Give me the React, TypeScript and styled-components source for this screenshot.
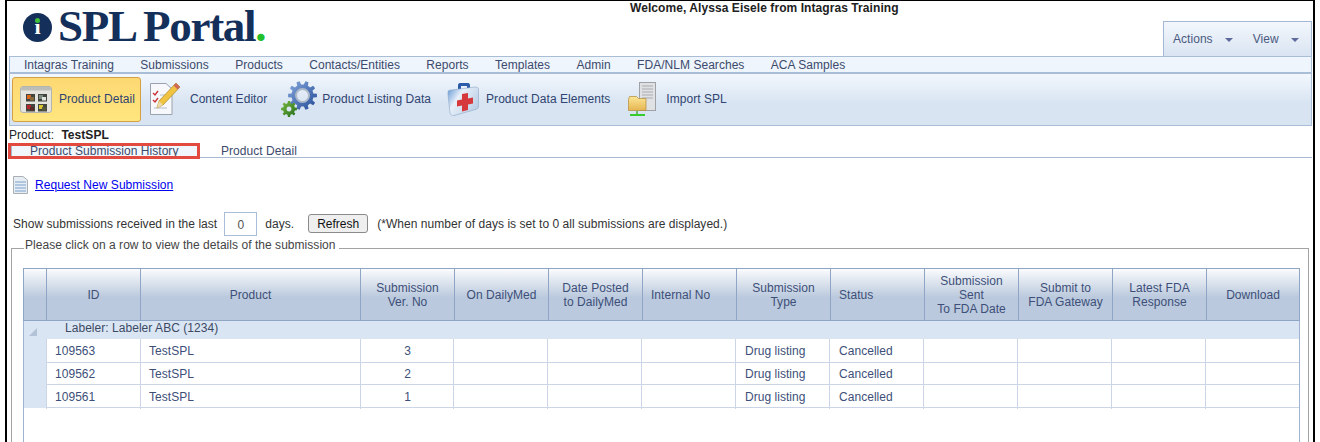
/**
 * SPL Portal product page: header, menu, ribbon, tabs and the submissions grid.
 */

import styled, { createGlobalStyle } from 'styled-components';

const Global = createGlobalStyle`
  html, body {
    margin: 0;
    height: 442px;
    overflow: hidden;
    background: #fff;
  }
  body {
    font-family: "Liberation Sans", Arial, sans-serif;
    font-size: 12px;
    letter-spacing: 0.04px;
    color: #333;
  }
`;

const Frame = styled.div`
  box-sizing: border-box;
  width: 1310px;
  height: 442px;
  margin-left: 5px;
  padding: 0 2px;
  border: 2px solid #000;
  border-width: 1.5px 2px 0 2px;
  overflow: hidden;
`;

const Header = styled.header`
  display: flex;
  height: 54.5px;
  margin-right: -1px;
`;

const Logo = styled.div`
  display: flex;
  align-items: flex-start;
  gap: 6px;
  width: 595px;
  padding: 4px 0 0 14px;
  box-sizing: border-box;
`;

const LogoBadge = styled.span`
  position: relative;
  flex: none;
  width: 29px;
  height: 29px;
  margin-top: 7.5px;
  border-radius: 50%;
  background: #14305a;
  color: #fff;
  font: bold 22px/28px "Liberation Serif", serif;
  letter-spacing: 0;
  text-align: center;

  &::before {
    content: '';
    position: absolute;
    left: 12px;
    top: 5px;
    width: 5px;
    height: 5px;
    border-radius: 50%;
    background: #3fbf3a;
  }
`;

const LogoText = styled.span`
  font: bold 45px/42px "Liberation Serif", serif;
  color: #14305a;
  letter-spacing: -1.3px;
  word-spacing: -1px;
  white-space: nowrap;

  b {
    color: #22c02a;
  }
`;

const Welcome = styled.div`
  flex: 1;
  padding: 1px 0 0 26px;
  font-weight: bold;
  color: #222;
  letter-spacing: 0.07px;
  line-height: 12px;
`;

const Actions = styled.div`
  display: flex;
  align-items: center;
  align-self: flex-end;
  box-sizing: border-box;
  width: 149px;
  height: 35px;
  padding: 0 0 0 9px;
  border: 1px solid #a5b8d3;
  border-bottom: 0;
  background: linear-gradient(#f3f7fc, #d9e4f2);
  color: #4a5a7e;
`;

const ActionLabel = styled.span`
  display: inline-flex;
  align-items: center;
  gap: 12px;
  margin-right: 20px;

  &::after {
    content: '';
    width: 0;
    height: 0;
    margin-top: 3px;
    border: 4px solid transparent;
    border-top-color: #5e6a9c;
    border-bottom: 0;
  }
`;

const Menu = styled.nav`
  display: flex;
  box-sizing: border-box;
  height: 16px;
  margin-right: -1px;
  padding-left: 0.7px;
  border: 1px solid #a9bed6;
  border-bottom: 0;
  background: #eef5fd;
  color: #3c4a6b;
  line-height: 16px;
`;

const MenuItem = styled.span`
  padding: 0 13.2px;
`;

const Ribbon = styled.div`
  display: flex;
  align-items: center;
  box-sizing: border-box;
  height: 54px;
  margin-right: -1px;
  padding: 0 2px;
  border: 1px solid #a9bed6;
  border-top-width: 2px;
  background: linear-gradient(#f2f7fd, #d8e4f2 58%);
`;

const RibbonButton = styled.div<{ $active?: boolean; $gap: number; $left: number }>`
  display: flex;
  align-items: center;
  box-sizing: border-box;
  gap: ${(p) => p.$gap}px;
  height: 45px;
  margin-left: ${(p) => p.$left}px;
  padding: 0 5px 0 7px;
  border: 1px solid ${(p) => (p.$active ? '#d59f45' : 'transparent')};
  border-radius: 3px;
  background: ${(p) => (p.$active ? 'linear-gradient(#fdd873, #ffe67e)' : 'transparent')};
  color: #2f4470;
  white-space: nowrap;
`;

const ProductLine = styled.div`
  height: 18px;
  padding-top: 2px;
  box-sizing: border-box;
  color: #222;
  line-height: 14px;

  strong {
    margin-left: 4px;
  }
`;

const Tabs = styled.div`
  display: flex;
  box-sizing: border-box;
  height: 14px;
  margin-right: -1px;
  border-bottom: 1px solid #a9b9cf;
  color: #3c4a6b;
`;

const Tab = styled.span<{ $selected?: boolean }>`
  box-sizing: content-box;
  flex: none;
  width: ${(p) => (p.$selected ? '149px' : 'auto')};
  height: 13px;
  margin-left: ${(p) => (p.$selected ? '0' : '22px')};
  padding: 1px ${(p) => (p.$selected ? '20px' : '0')} 0 ${(p) => (p.$selected ? '21px' : '0')};
  background: ${(p) => (p.$selected ? '#f1f6fc' : 'transparent')};
  box-shadow: ${(p) => (p.$selected ? 'inset 3px 0 0 #a9b9cf' : 'none')};
  outline: ${(p) => (p.$selected ? '3px solid #e2493f' : 'none')};
  outline-offset: -2px;
  line-height: 13px;
  white-space: nowrap;
`;

const RequestRow = styled.div`
  display: flex;
  align-items: center;
  gap: 7px;
  height: 22px;
  margin: 16px 0 0 4px;

  a {
    color: #0000ee;
    text-decoration: underline;
  }
`;

const FilterRow = styled.div`
  display: flex;
  align-items: center;
  height: 24px;
  margin: 16px 0 0 4px;
  color: #333;
`;

const DaysInput = styled.input`
  box-sizing: border-box;
  width: 33px;
  height: 24px;
  margin: 0 8px 0 7px;
  padding: 2px 0 0;
  border: 1px solid #a9bdd6;
  background: #fff;
  font: 12px "Liberation Sans", Arial, sans-serif;
  color: #555;
  text-align: center;
`;

const RefreshButton = styled.button`
  box-sizing: border-box;
  width: 60px;
  height: 19px;
  margin: 0 9px 0 14px;
  padding: 0;
  border: 1px solid #8a8a8a;
  border-radius: 3px;
  background: #efefef;
  font: 12px "Liberation Sans", Arial, sans-serif;
  color: #111;
`;

const Group = styled.fieldset`
  box-sizing: border-box;
  width: 1298px;
  height: 270px;
  margin: 2px 0 0 2px;
  padding: 8px 7px 0 11px;
  border: 1px solid #a3a3a3;
  border-bottom: 0;

  legend {
    margin-left: 1px;
    padding: 0 3px 8px 1px;
    line-height: 14px;
    color: #444;
  }
`;

const Grid = styled.div`
  box-sizing: border-box;
  width: 1277px;
  height: 220px;
  border: 1px solid #9fb2cf;
  border-top: 0;
  color: #3d4f78;
`;

const HeadRow = styled.div`
  display: grid;
  grid-template-columns: 22px 94px 220px repeat(9, 94px) 1fr;
  height: 53px;
  margin: 0 -1px;
  border: 1px solid #8fa5c6;
  box-sizing: border-box;
  background: linear-gradient(#fafbfd, #bac9dd 56%);
  line-height: 14px;
`;

const HeadCell = styled.div<{ $left?: boolean }>`
  display: flex;
  align-items: center;
  justify-content: ${(p) => (p.$left ? 'flex-start' : 'center')};
  padding: 1px 0 0 ${(p) => (p.$left ? '8px' : '0')};
  border-left: 1px solid #8fa5c6;
  text-align: center;

  &:first-child {
    border-left: 0;
  }
`;

const GroupRow = styled.div`
  position: relative;
  height: 18px;
  padding-left: 41px;
  background: #d9e5f3;
  color: #3c4a64;
  line-height: 15px;

  &::before {
    content: '';
    position: absolute;
    left: 5px;
    top: 7px;
    border-style: solid;
    border-width: 0 0 8px 8px;
    border-color: transparent transparent #b3c2d6 transparent;
  }
`;

const Rows = styled.div`
  border-left: 22px solid #d9e5f3;
`;

const DataRow = styled.div<{ $height: number }>`
  display: grid;
  grid-template-columns: 94px 220px 94px repeat(8, 94px) 1fr;
  height: ${(p) => p.$height}px;
  border-bottom: 1px solid #ccd5e8;
  box-sizing: border-box;
  line-height: ${(p) => p.$height + 1}px;
`;

const DataCell = styled.div<{ $center?: boolean }>`
  box-sizing: border-box;
  padding-left: ${(p) => (p.$center ? '0' : '8px')};
  border-left: 1px solid #ccd5e8;
  text-align: ${(p) => (p.$center ? 'center' : 'left')};
  white-space: nowrap;

  &:nth-child(n + 4) {
    position: relative;
    left: -1px;
    padding-left: 9px;
  }
`;

const BarIcon = styled.svg`
  display: block;
  flex: none;
`;

// toothed outline used for both gears of the listing icon
function gearPath(cx: number, cy: number, outer: number, inner: number, teeth: number) {
  const pts: string[] = [];
  const step = (Math.PI * 2) / teeth;
  for (let i = 0; i < teeth; i++) {
    const a = i * step;
    [
      [inner, a - step * 0.5],
      [inner, a - step * 0.3],
      [outer, a - step * 0.18],
      [outer, a + step * 0.18],
      [inner, a + step * 0.3],
    ].forEach(([r, t]) => {
      pts.push(`${(cx + r * Math.cos(t)).toFixed(2)} ${(cy + r * Math.sin(t)).toFixed(2)}`);
    });
  }
  return `M${pts.join('L')}Z`;
}

function DetailIcon() {
  const tiles = [
    [6, 10, '#d9661f', '#8a6a3a'],
    [18, 10, '#7d8a80', '#e2e4de'],
    [6, 20, '#b3262b', '#5c2a2a'],
    [18, 20, '#d8c52f', '#55583a'],
  ] as const;
  return (
    <BarIcon width="32" height="31" viewBox="0 0 32 31">
      <rect x="0.5" y="2.5" width="31" height="26" rx="2.5" fill="#e4e3dd" stroke="#b4b4ae" />
      <rect x="1" y="3" width="30" height="3.5" rx="1.5" fill="#bdbdb7" />
      {tiles.map(([x, y, a, b]) => (
        <g key={`${x}-${y}`}>
          <rect x={x} y={y} width="9" height="7.500" fill="#43463f" />
          <rect x={x + 1} y={y + 1} width="4" height="4" fill={a} />
          <rect x={x + 4} y={y + 3} width="4" height="3.500" fill={b} />
        </g>
      ))}
    </BarIcon>
  );
}

function EditorIcon() {
  return (
    <BarIcon width="32" height="34" viewBox="0 0 32 34">
      <path d="M1.500 1.500H17L23 7V32.500H1.500Z" fill="#f7f8fb" stroke="#9aa3ad" />
      <path d="M4 11l2 2 3-4M4 18l2 2 3-4" fill="none" stroke="#c8353a" strokeWidth="1.4" />
      <path d="M5 26h13M11 13h8M11 20h4" stroke="#b7bec7" />
      <path d="M27 1l4 4-17 18-6 3 2-7Z" fill="#f0c440" stroke="#a98524" strokeWidth="0.7" />
      <path d="M27 1l4 4-2.500 2.600-4-4Z" fill="#cf6a5a" />
      <path d="M8 26l2-7 4 4Z" fill="#ecd9ae" />
    </BarIcon>
  );
}

function ListingIcon() {
  return (
    <BarIcon width="36" height="36" viewBox="0 0 36 36">
      <defs>
        <linearGradient id="gearBlue" x1="0" y1="0" x2="1" y2="1">
          <stop offset="0" stopColor="#86a8dd" />
          <stop offset="1" stopColor="#234b96" />
        </linearGradient>
        <linearGradient id="gearGreen" x1="0" y1="0" x2="1" y2="1">
          <stop offset="0" stopColor="#7dbb3e" />
          <stop offset="1" stopColor="#1f6a1c" />
        </linearGradient>
      </defs>
      <path
        fillRule="evenodd"
        d={`${gearPath(21.5, 14.5, 14.5, 11, 10)}M21.500 8.500a6 6 0 1 0 .01 0Z`}
        fill="url(#gearBlue)"
      />
      <circle cx="21.500" cy="14.500" r="6.500" fill="none" stroke="#aeb9c9" strokeWidth="2" />
      <path
        fillRule="evenodd"
        d={`${gearPath(8, 28, 8, 6, 8)}M8 25.500a2.500 2.500 0 1 0 .01 0Z`}
        fill="url(#gearGreen)"
      />
    </BarIcon>
  );
}

function KitIcon() {
  return (
    <BarIcon width="32" height="34" viewBox="0 0 32 34">
      <defs>
        <linearGradient id="kitBody" x1="0" y1="0" x2="1" y2="0.6">
          <stop offset="0" stopColor="#5f93d3" />
          <stop offset="0.4" stopColor="#e7f0fa" />
          <stop offset="1" stopColor="#bcd0e6" />
        </linearGradient>
      </defs>
      <path d="M11 8V3.500C11 1.500 12 1 14 1h6c2 0 3 .5 3 2.500V7h-3V4h-6v4Z" fill="#2a5aa8" />
      <path
        d="M1 10c0-1 .5-1.500 1.500-1.700L28.500 5c2 0 3 1 3 2.500V24c0 1.500-.5 2.500-2 3.200L7 33.500c-2 .5-3.500-.5-4-2.500L1 13Z"
        fill="url(#kitBody)"
        stroke="#8fa8c6"
        strokeWidth="0.6"
      />
      <path d="M15 12l6-1v5.500l5-1v6l-5 1V28l-6 1.500V23.500l-5 1v-6l5-1Z" fill="#d5393c" />
    </BarIcon>
  );
}

function ImportIcon() {
  return (
    <BarIcon width="30" height="35" viewBox="0 0 30 35">
      <defs>
        <linearGradient id="folderFill" x1="0" y1="0" x2="0" y2="1">
          <stop offset="0" stopColor="#fbe694" />
          <stop offset="1" stopColor="#e6b551" />
        </linearGradient>
      </defs>
      <rect x="11.500" y="0.500" width="16" height="28" fill="#dfe1e3" stroke="#9ea2a6" />
      <path d="M14 4h11M14 7h11M14 10h11M14 13h11M14 16h11" stroke="#a9adb1" />
      <path
        d="M0.500 17.500l1-3h7l2 2h7.500v12h-17.500Z"
        fill="url(#folderFill)"
        stroke="#b08b3c"
        strokeWidth="0.7"
      />
      <path d="M9 29v3" stroke="#4aa83a" strokeWidth="1.500" />
      <path d="M2 33h15" stroke="#37cc2e" strokeWidth="2" />
    </BarIcon>
  );
}

function DocIcon() {
  return (
    <BarIcon width="15" height="18" viewBox="0 0 15 18">
      <path d="M0.500 0.500H10L14.500 4V17.500H0.500Z" fill="#e6edf3" stroke="#a9afb4" />
      <path d="M2 6h11M2 9h11M2 12h11M2 15h11" stroke="#7aa0cf" />
    </BarIcon>
  );
}

const menuItems = [
  'Intagras Training',
  'Submissions',
  'Products',
  'Contacts/Entities',
  'Reports',
  'Templates',
  'Admin',
  'FDA/NLM Searches',
  'ACA Samples',
];

const columns: { label: string[]; left?: boolean }[] = [
  { label: ['ID'] },
  { label: ['Product'] },
  { label: ['Submission', 'Ver. No'] },
  { label: ['On DailyMed'] },
  { label: ['Date Posted', 'to DailyMed'] },
  { label: ['Internal No'], left: true },
  { label: ['Submission', 'Type'] },
  { label: ['Status'], left: true },
  { label: ['Submission', 'Sent', 'To FDA Date'] },
  { label: ['Submit to', 'FDA Gateway'] },
  { label: ['Latest FDA', 'Response'] },
  { label: ['Download'] },
];

const rows = [
  { id: '109563', version: '3', height: 24 },
  { id: '109562', version: '2', height: 22 },
  { id: '109561', version: '1', height: 23 },
];

export default function App() {
  return (
    <Frame>
      <Global />
      <Header>
        <Logo>
          <LogoBadge>ı</LogoBadge>
          <LogoText>
            SPL Portal<b>.</b>
          </LogoText>
        </Logo>
        <Welcome>Welcome, Alyssa Eisele from Intagras Training</Welcome>
        <Actions>
          <ActionLabel>Actions</ActionLabel>
          <ActionLabel>View</ActionLabel>
        </Actions>
      </Header>
      <Menu>
        {menuItems.map((item) => (
          <MenuItem key={item}>{item}</MenuItem>
        ))}
      </Menu>
      <Ribbon>
        <RibbonButton $active $gap={7} $left={0}>
          <DetailIcon />
          Product Detail
        </RibbonButton>
        <RibbonButton $gap={9} $left={0}>
          <EditorIcon />
          Content Editor
        </RibbonButton>
        <RibbonButton $gap={5} $left={0}>
          <ListingIcon />
          Product Listing Data
        </RibbonButton>
        <RibbonButton $gap={7} $left={2}>
          <KitIcon />
          Product Data Elements
        </RibbonButton>
        <RibbonButton $gap={8} $left={4}>
          <ImportIcon />
          Import SPL
        </RibbonButton>
      </Ribbon>
      <ProductLine>
        Product: <strong>TestSPL</strong>
      </ProductLine>
      <Tabs>
        <Tab $selected>Product Submission History</Tab>
        <Tab>Product Detail</Tab>
      </Tabs>
      <RequestRow>
        <DocIcon />
        <a href="#request">Request New Submission</a>
      </RequestRow>
      <FilterRow>
        Show submissions received in the last
        <DaysInput defaultValue="0" aria-label="Days" />
        days.
        <RefreshButton type="button">Refresh</RefreshButton>
        (*When number of days is set to 0 all submissions are displayed.)
      </FilterRow>
      <Group>
        <legend>Please click on a row to view the details of the submission</legend>
        <Grid>
          <HeadRow>
            <HeadCell />
            {columns.map((col, i) => (
              <HeadCell key={i} $left={col.left}>
                <span>
                  {col.label.map((line) => (
                    <div key={line}>{line}</div>
                  ))}
                </span>
              </HeadCell>
            ))}
          </HeadRow>
          <GroupRow>Labeler: Labeler ABC (1234)</GroupRow>
          <Rows>
            {rows.map((row) => (
              <DataRow key={row.id} $height={row.height}>
                <DataCell>{row.id}</DataCell>
                <DataCell>TestSPL</DataCell>
                <DataCell $center>{row.version}</DataCell>
                <DataCell />
                <DataCell />
                <DataCell />
                <DataCell>Drug listing</DataCell>
                <DataCell>Cancelled</DataCell>
                <DataCell />
                <DataCell />
                <DataCell />
                <DataCell />
              </DataRow>
            ))}
          </Rows>
        </Grid>
      </Group>
    </Frame>
  );
}
